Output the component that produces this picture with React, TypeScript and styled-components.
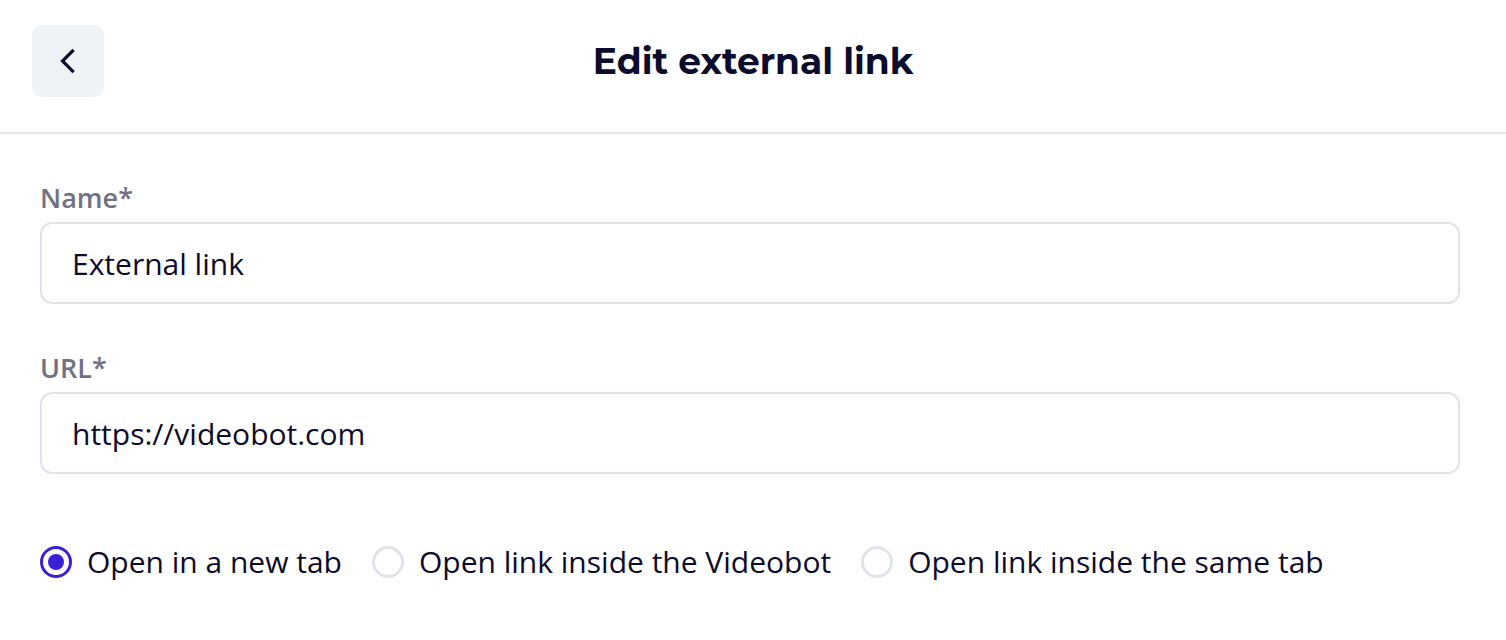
import React, { useState } from 'react';
import styled, { createGlobalStyle } from 'styled-components';

const GlobalStyle = createGlobalStyle`
  html, body {
    margin: 0;
    padding: 0;
    background: #ffffff;
  }
  body {
    font-family: 'Open Sans', 'Liberation Sans', sans-serif;
    color: #0c0c2c;
  }
`;

/* Header */
const Header = styled.header`
  height: 134px;
  border-bottom: 2px solid #e3e5ec;
  display: grid;
  grid-template-columns: 72px 1fr 72px;
  align-items: start;
  padding: 25px 32px 0;
  box-sizing: border-box;
`;

const BackButton = styled.button`
  width: 72px;
  height: 72px;
  border: none;
  border-radius: 10px;
  background: #eff2f7;
  display: flex;
  align-items: center;
  justify-content: center;
  cursor: pointer;
  padding: 0;
`;

const Title = styled.h1`
  margin: 0;
  height: 72px;
  line-height: 72px;
  text-align: center;
  font-family: 'Montserrat', 'Inter', 'Liberation Sans', sans-serif;
  font-weight: 700;
  font-size: 36px;
  color: #0c0c2c;
`;

/* Form */
const Form = styled.form`
  padding: 46px 46px 0 40px;
  display: flex;
  flex-direction: column;
`;

const Field = styled.label`
  display: flex;
  flex-direction: column;
  gap: 6px;
  margin-bottom: 46px;
`;

const Label = styled.span`
  font-size: 27px;
  font-weight: 600;
  color: #6f7285;
  line-height: 36px;
`;

const Input = styled.input`
  height: 82px;
  box-sizing: border-box;
  border: 2px solid #e0e3ec;
  border-radius: 12px;
  padding: 0 30px;
  font-family: inherit;
  font-size: 30px;
  color: #0c0c2c;
  outline: none;
  background: #fff;
`;

const RadioRow = styled.div`
  display: flex;
  align-items: center;
  gap: 30px;
  margin-top: 22px;
`;

const RadioOption = styled.label`
  display: flex;
  align-items: center;
  gap: 15px;
  font-size: 30px;
  line-height: 40px;
  color: #0c0c2c;
  cursor: pointer;
`;

const RadioCircle = styled.span<{ $checked: boolean }>`
  width: 32px;
  height: 32px;
  box-sizing: border-box;
  border-radius: 50%;
  border: 3px solid ${p => (p.$checked ? '#3a20d6' : '#e0e3ec')};
  display: flex;
  align-items: center;
  justify-content: center;

  &::after {
    content: '';
    width: 16px;
    height: 16px;
    border-radius: 50%;
    background: #3a20d6;
    display: ${p => (p.$checked ? 'block' : 'none')};
  }
`;

const HiddenRadio = styled.input`
  display: none;
`;

const options = [
  { id: 'new-tab', label: 'Open in a new tab' },
  { id: 'videobot', label: 'Open link inside the Videobot' },
  { id: 'same-tab', label: 'Open link inside the same tab' },
];

export default function App() {
  const [target, setTarget] = useState('new-tab');
  const [name, setName] = useState('External link');
  const [url, setUrl] = useState('https://videobot.com');

  return (
    <>
      <GlobalStyle />
      <Header>
        <BackButton type="button" aria-label="Back">
          <svg width="28" height="28" viewBox="0 0 28 28" fill="none">
            <path d="M18.5 4 L8.5 14 L18.5 24" stroke="#0c0c2c" strokeWidth="3.2" strokeLinecap="square" />
          </svg>
        </BackButton>
        <Title>Edit external link</Title>
        <span />
      </Header>
      <Form onSubmit={e => e.preventDefault()}>
        <Field>
          <Label>Name*</Label>
          <Input value={name} onChange={e => setName(e.target.value)} />
        </Field>
        <Field>
          <Label>URL*</Label>
          <Input value={url} onChange={e => setUrl(e.target.value)} />
        </Field>
        <RadioRow>
          {options.map(o => (
            <RadioOption key={o.id}>
              <HiddenRadio
                type="radio"
                name="target"
                checked={target === o.id}
                onChange={() => setTarget(o.id)}
              />
              <RadioCircle $checked={target === o.id} />
              {o.label}
            </RadioOption>
          ))}
        </RadioRow>
      </Form>
    </>
  );
}
